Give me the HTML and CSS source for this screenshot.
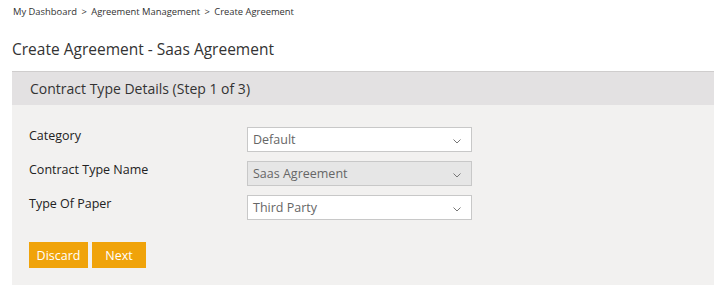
FILE: index.html
```html
<!DOCTYPE html>
<html lang="en">
<head>
    <meta charset="UTF-8">
    <title>Create Agreement</title>
    <link rel="stylesheet" href="styles.css">
</head>
<body>
    <div class="breadcrumb">
        <a href="#">My Dashboard</a>
        <span class="sep">&gt;</span>
        <a href="#">Agreement Management</a>
        <span class="sep">&gt;</span>
        <span>Create Agreement</span>
    </div>

    <h1 class="page-title">Create Agreement - Saas Agreement</h1>

    <div class="panel">
        <div class="panel-head">Contract Type Details (Step 1 of 3)</div>
        <div class="panel-body">
            <div class="form-row">
                <label>Category</label>
                <div class="select">
                    <span>Default</span>
                    <svg class="chev" width="8" height="5" viewBox="0 0 8 5"><path d="M0.5 0.5 L4 4 L7.5 0.5" fill="none" stroke="#777" stroke-width="1"/></svg>
                </div>
            </div>
            <div class="form-row">
                <label>Contract Type Name</label>
                <div class="select disabled">
                    <span>Saas Agreement</span>
                    <svg class="chev" width="8" height="5" viewBox="0 0 8 5"><path d="M0.5 0.5 L4 4 L7.5 0.5" fill="none" stroke="#777" stroke-width="1"/></svg>
                </div>
            </div>
            <div class="form-row">
                <label>Type Of Paper</label>
                <div class="select">
                    <span>Third Party</span>
                    <svg class="chev" width="8" height="5" viewBox="0 0 8 5"><path d="M0.5 0.5 L4 4 L7.5 0.5" fill="none" stroke="#777" stroke-width="1"/></svg>
                </div>
            </div>

            <div class="actions">
                <button class="btn btn-discard">Discard</button>
                <button class="btn btn-next">Next</button>
            </div>
        </div>
    </div>
</body>
</html>
```

FILE: styles.css
```css
body {
    margin: 0;
    font-family: "Open Sans", "Noto Sans", Arial, sans-serif;
    color: #333;
    background-color: #fff;
}

.breadcrumb {
    padding: 5px 0 0 13px;
    font-size: 9.4px;
    line-height: 14px;
    color: #333;
}

.breadcrumb a {
    color: #333;
    text-decoration: none;
}

.breadcrumb .sep {
    margin: 0 2px;
}

.page-title {
    margin: 20px 0 0 12px;
    font-size: 15.5px;
    font-weight: normal;
    line-height: 20px;
    color: #333;
}

.panel {
    margin: 12px 0 0 12px;
    border-top: 1px solid #cfcdcd;
    background-color: #f2f1f0;
    height: 213px;
}

.panel-head {
    background-color: #e3e1e2;
    height: 33px;
    line-height: 33px;
    padding-left: 18px;
    font-size: 14px;
    color: #333;
}

.panel-body {
    padding: 21px 0 0 17px;
}

.form-row {
    display: flex;
    align-items: flex-start;
    height: 34px;
}

.form-row label {
    width: 218px;
    padding-top: 1px;
    font-size: 12.5px;
    line-height: 18px;
    color: #222;
}

.select {
    width: 225px;
    height: 25px;
    margin-top: 1px;
    border: 1px solid #c8c8c8;
    background-color: #fff;
    display: flex;
    align-items: center;
    justify-content: space-between;
    padding: 0 10px 0 5px;
    box-sizing: border-box;
    font-size: 12.5px;
    color: #666;
}

.select.disabled {
    background-color: #e6e6e6;
}

.chev {
    margin-top: 3px;
}

.actions {
    display: flex;
    gap: 4px;
    margin-top: 14px;
}

.btn {
    background-color: #f0a30a;
    color: #fff;
    border: none;
    height: 26px;
    padding: 0;
    font-family: inherit;
    font-size: 12.5px;
    cursor: pointer;
}

.btn-discard {
    width: 59px;
}

.btn-next {
    width: 54px;
}
```
